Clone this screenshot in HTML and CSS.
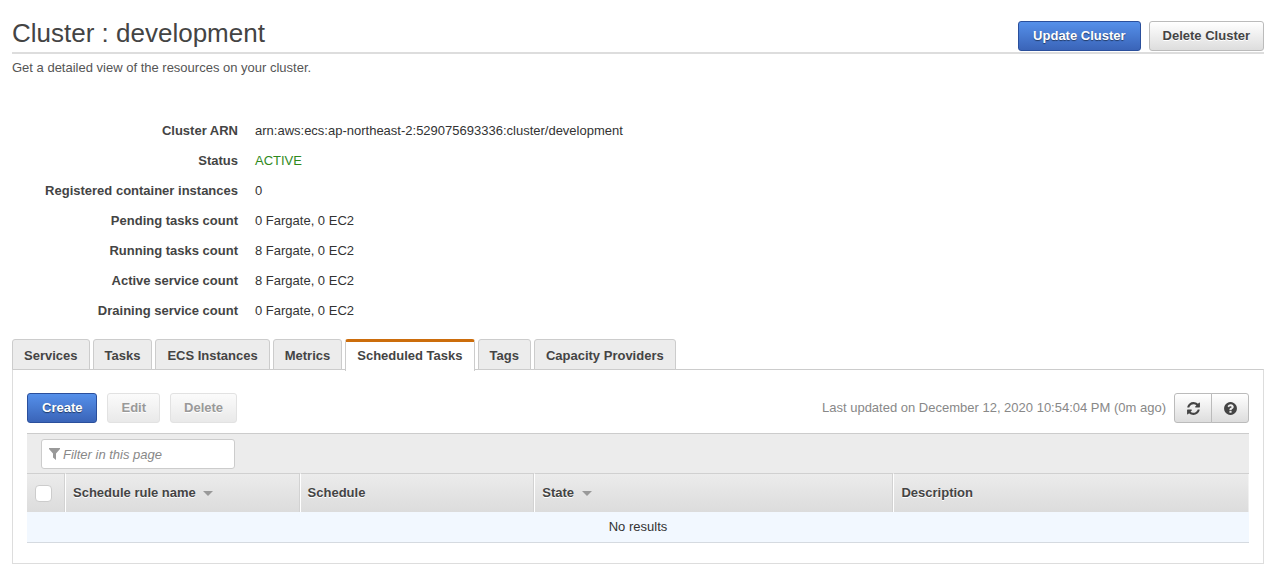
FILE: index.html
```html
<!DOCTYPE html>
<html lang="en">
<head>
    <meta charset="UTF-8">
    <meta name="viewport" content="width=device-width, initial-scale=1.0">
    <title>Cluster : development</title>
    <link rel="stylesheet" href="styles.css">
</head>
<body>
    <header class="page-header">
        <h1>Cluster : development</h1>
        <div class="header-actions">
            <button type="button" class="btn btn-primary">Update Cluster</button>
            <button type="button" class="btn">Delete Cluster</button>
        </div>
    </header>
    <p class="description">Get a detailed view of the resources on your cluster.</p>

    <dl class="details">
        <dt>Cluster ARN</dt>
        <dd>arn:aws:ecs:ap-northeast-2:529075693336:cluster/development</dd>
        <dt>Status</dt>
        <dd class="status-active">ACTIVE</dd>
        <dt>Registered container instances</dt>
        <dd>0</dd>
        <dt>Pending tasks count</dt>
        <dd>0 Fargate, 0 EC2</dd>
        <dt>Running tasks count</dt>
        <dd>8 Fargate, 0 EC2</dd>
        <dt>Active service count</dt>
        <dd>8 Fargate, 0 EC2</dd>
        <dt>Draining service count</dt>
        <dd>0 Fargate, 0 EC2</dd>
    </dl>

    <nav class="tabs">
        <a class="tab" href="#services">Services</a>
        <a class="tab" href="#tasks">Tasks</a>
        <a class="tab" href="#instances">ECS Instances</a>
        <a class="tab" href="#metrics">Metrics</a>
        <a class="tab active" href="#scheduled" aria-current="page">Scheduled Tasks</a>
        <a class="tab" href="#tags">Tags</a>
        <a class="tab" href="#capacity">Capacity Providers</a>
    </nav>

    <main class="panel" id="scheduled">
        <div class="toolbar">
            <button type="button" class="btn btn-primary">Create</button>
            <button type="button" class="btn" disabled>Edit</button>
            <button type="button" class="btn" disabled>Delete</button>
            <span class="updated">Last updated on December 12, 2020 10:54:04 PM (0m ago)</span>
            <div class="btn-group">
                <button type="button" class="btn btn-icon" aria-label="Refresh">
                    <svg viewBox="0 0 1792 1792"><path d="M1639 1056q0 5-1 7-64 268-268 434.500t-478 166.500q-146 0-282.500-55t-243.500-157l-129 129q-19 19-45 19t-45-19-19-45v-448q0-26 19-45t45-19h448q26 0 45 19t19 45-19 45l-137 137q71 66 161 102t187 36q134 0 250-65t186-179q11-17 53-117 8-23 30-23h192q13 0 22.500 9.500t9.500 22.500zm25-800v448q0 26-19 45t-45 19h-448q-26 0-45-19t-19-45 19-45l138-138q-148-137-349-137-134 0-250 65t-186 179q-11 17-53 117-8 23-30 23h-199q-13 0-22.500-9.500t-9.500-22.500v-7q65-268 270-434.500t480-166.500q146 0 284 55.500t245 156.500l130-129q19-19 45-19t45 19 19 45z"/></svg>
                </button>
                <button type="button" class="btn btn-icon" aria-label="Help">
                    <svg viewBox="0 0 1792 1792"><path d="M1024 1376v-192q0-14-9-23t-23-9h-192q-14 0-23 9t-9 23v192q0 14 9 23t23 9h192q14 0 23-9t9-23zm256-672q0-88-55.500-163t-138.500-116-170-41q-243 0-371 213-15 24 8 42l132 100q7 6 19 6 16 0 25-12 53-68 86-92 34-24 86-24 48 0 85.500 26t37.500 59q0 38-20 61t-68 45q-63 28-115.500 86.500t-52.500 125.500v36q0 14 9 23t23 9h192q14 0 23-9t9-23q0-19 21.500-49.500t54.500-49.500q32-18 49-28.500t46-35 44.500-48 28-60.500 12.500-81zm384 192q0 209-103 385.500t-279.500 279.500-385.500 103-385.500-103-279.500-279.500-103-385.500 103-385.500 279.500-279.500 385.500-103 385.500 103 279.500 279.500 103 385.500z"/></svg>
                </button>
            </div>
        </div>

        <div class="filter-bar">
            <label class="filter">
                <svg viewBox="0 0 11 12"><path d="M0 0h11v1L7 5.500V12L4 9.500v-4L0 1z"/></svg>
                <input type="text" placeholder="Filter in this page" aria-label="Filter in this page">
            </label>
        </div>

        <table class="rules">
            <colgroup>
                <col class="col-check">
                <col class="col-name">
                <col class="col-schedule">
                <col class="col-state">
                <col>
            </colgroup>
            <thead>
                <tr>
                    <th><input type="checkbox" aria-label="Select all"></th>
                    <th>Schedule rule name <span class="caret"></span></th>
                    <th>Schedule</th>
                    <th>State <span class="caret"></span></th>
                    <th>Description</th>
                </tr>
            </thead>
            <tbody>
                <tr>
                    <td colspan="5">No results</td>
                </tr>
            </tbody>
        </table>
    </main>
</body>
</html>
```
FILE: styles.css
```css
* { margin: 0; padding: 0; box-sizing: border-box; }
body { padding: 16px 16px 18px 12px; background: #fff; color: #444; font-family: "Helvetica Neue", "Liberation Sans", Arial, sans-serif; font-size: 13px; line-height: 20px; }

/* Header */
.page-header { display: flex; justify-content: space-between; align-items: flex-start; border-bottom: 2px solid #ddd; }
.page-header h1 { padding-bottom: 2px; font-size: 26px; font-weight: normal; line-height: 34px; }
.header-actions { display: flex; gap: 8px; padding-top: 5px; }
.description { margin-top: 4px; color: #555; }

/* Buttons */
.btn { height: 30px; padding: 0 13px; border: 1px solid #bbb; border-radius: 3px; background: linear-gradient(#fff, #ddd); color: #444; font: bold 13px/20px "Helvetica Neue", "Liberation Sans", Arial, sans-serif; text-shadow: 0 1px 0 #fff; white-space: nowrap; cursor: pointer; }
.btn-primary { padding: 0 14px; border-color: #2a4f9c; background: linear-gradient(#5590ea, #3a64b8); color: #fff; text-shadow: 0 1px 1px rgba(0, 0, 0, 0.5); }
.btn:disabled { border-color: #e2e2e2; background: linear-gradient(#fbfbfb, #e9e9e9); color: #999; cursor: default; }
.btn-icon { display: flex; width: 38px; justify-content: center; align-items: center; padding: 0; }
.btn-icon svg { width: 15px; height: 15px; fill: #444; }
.btn-icon:first-child { border-radius: 3px 0 0 3px; }
.btn-icon:last-child { margin-left: -1px; border-radius: 0 3px 3px 0; }

/* Cluster details */
.details { display: grid; grid-template-columns: 226px 1fr; column-gap: 17px; margin: 38px 0 13px; line-height: 30px; }
.details dt { font-weight: bold; text-align: right; }
.details dd { color: #333; }
.details .status-active { color: #2f8a1d; }

/* Tabs */
.tabs { display: flex; gap: 3px; }
.tab { height: 31px; padding: 6px 11px 0; border: 1px solid #ccc; border-radius: 3px 3px 0 0; background: #ececec; color: #444; font-weight: bold; text-decoration: none; white-space: nowrap; }
.tab.active { position: relative; height: 32px; margin-bottom: -1px; padding-top: 4px; border-top: 3px solid #cc6d0c; border-bottom: 0; background: #fff; }
.panel { margin-top: -1px; padding: 23px 14px 20px; border: 1px solid #ddd; border-top-color: #ccc; }

/* Toolbar */
.toolbar { display: flex; align-items: center; gap: 10px; margin-bottom: 10px; }
.updated { margin-left: auto; color: #888; }
.btn-group { display: flex; margin-left: -2px; }

/* Filter */
.filter-bar { padding: 5px 14px 4px; border-top: 1px solid #ccc; background: #ececec; }
.filter { display: flex; align-items: center; width: 194px; height: 30px; padding: 0 7px; border: 1px solid #ccc; border-radius: 3px; background: #fff; }
.filter svg { flex: none; width: 11px; height: 12px; margin-right: 3px; fill: #999; }
.filter input { width: 100%; border: 0; outline: 0; background: none; color: #444; font: 13px "Helvetica Neue", "Liberation Sans", Arial, sans-serif; }
.filter input::placeholder { color: #888; font-style: italic; }

/* Rules table */
.rules { width: 100%; table-layout: fixed; border-collapse: separate; border-spacing: 0; }
.col-check { width: 38px; }
.col-name, .col-schedule { width: 19.2%; }
.col-state { width: 29.4%; }
.rules thead tr { background: linear-gradient(#ececec, #dcdcdc); }
.rules th { height: 39px; padding: 0 7px; border-top: 1px solid #d0d0d0; border-left: 1px solid #fff; box-shadow: inset -1px 0 0 #d2d2d2; text-align: left; text-shadow: 0 1px 0 #fff; }
.rules th:first-child { border-left: 0; }
.rules th:last-child { box-shadow: none; }
.rules td { height: 31px; border-bottom: 1px solid #d5dae0; background: #f2f8ff; color: #333; text-align: center; }
.rules input { display: block; width: 17px; height: 17px; margin-left: 1px; appearance: none; border: 1px solid #ccc; border-radius: 4px; background: #fff; }
.caret { display: inline-block; margin-left: 4px; border: 5px solid transparent; border-top-color: #999; border-bottom: 0; vertical-align: middle; }
```
